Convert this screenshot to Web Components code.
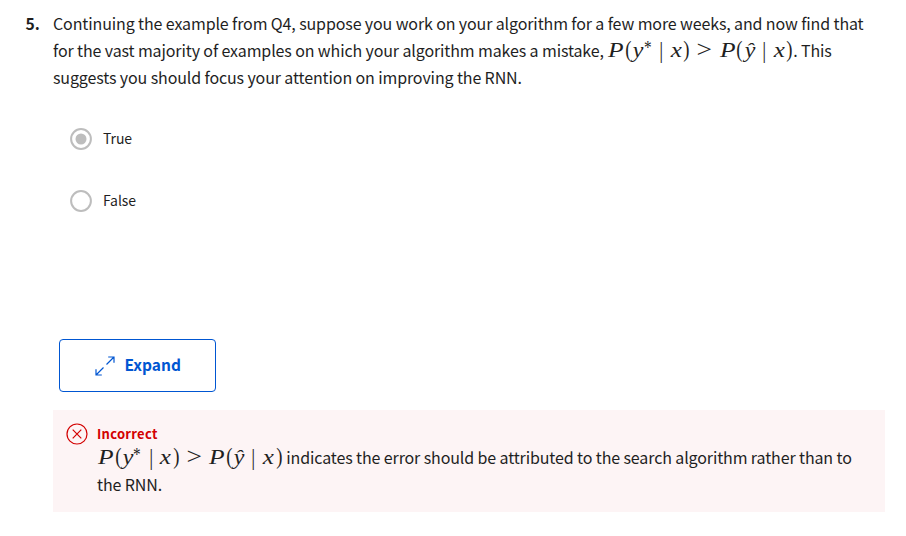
<!DOCTYPE html>
<html lang="en"><head><meta charset="utf-8"><title>Quiz question</title>
<style>
html,body{margin:0;padding:0;background:#fff}
body{color:#1f1f1f;font-family:"Noto Sans CJK SC","Noto Sans",sans-serif}
</style></head><body>
<quiz-question></quiz-question>
<script>
const define=(name,html)=>customElements.define(name,class extends HTMLElement{
 constructor(){super();this.attachShadow({mode:'open'}).innerHTML=html}});

define('text-line',`<style>:host{display:flex;align-items:baseline;height:27px;line-height:27px;white-space:nowrap;font-size:16px;letter-spacing:-.118px}</style><slot></slot>`);

define('math-formula',`<style>
:host{display:inline-flex;align-items:baseline;font:21.78px/27px "Liberation Serif",serif;height:27px;letter-spacing:0}
span{display:inline-block;white-space:pre;line-height:27px}
i{display:inline-block;transform-origin:0 70%}
.p{width:16.8px}.p i{transform:translateX(1.1px) scaleX(1.17)}
.b{width:8.3px}.b i{font-style:normal;transform:translateX(1.3px) scale(.86,1.06)}
.y{width:11.3px}.y i{transform:translateX(.8px) scale(1.1,1)}
.s{width:8.5px;font-size:18px}.s i{font-style:normal;transform:translateY(-3px) scaleX(.85)}
.v{width:17.6px;text-align:center}.v i{font-style:normal;transform-origin:50% 50%;transform:scale(.9,1.08)}
.x{width:12.2px}.x i{transform:translateX(.8px) scaleX(1.15)}
.g{width:28.4px;text-align:center}.g i{font-style:normal;transform-origin:50% 70%;transform:scale(1.26,1.08)}
</style><span class="p"><i>P</i></span><span class="b"><i>(</i></span><span class="y"><i>y</i></span><span class="s"><i>*</i></span><span class="v"><i>|</i></span><span class="x"><i>x</i></span><span class="b"><i>)</i></span><span class="g"><i>&gt;</i></span><span class="p"><i>P</i></span><span class="b"><i>(</i></span><span class="y"><i>ŷ</i></span><span class="v"><i>|</i></span><span class="x"><i>x</i></span><span class="b"><i>)</i></span>`);

define('radio-option',`<style>:host{display:flex;align-items:center;height:22px;gap:11px;font-size:14px;line-height:22px;letter-spacing:-.1px}svg{display:block}span{margin-top:-2px}:host(:not([checked])) .dot{display:none}</style>
<svg width="22" height="22"><circle cx="11" cy="11" r="9.9" fill="#fff" stroke="#bdbdbd" stroke-width="2"/><circle class="dot" cx="11" cy="11" r="5.5" fill="#bdbdbd"/></svg><span><slot></slot></span>`);

define('expand-button',`<style>:host{display:block}button{box-sizing:border-box;width:157px;height:53px;border:1px solid #0056d2;border-radius:4px;background:#fff;color:#0056d2;display:flex;align-items:center;padding:0 0 0 35px;gap:9.5px;font:bold 15.5px/24px "Noto Sans CJK SC",sans-serif}span{margin-top:-4px}</style>
<button><svg width="20" height="20" fill="none" stroke="#0056d2" stroke-width="1.2"><path d="M11.5 8.5 19 1M13.2 1H19V6.8M8.5 11.5 1 19M1 13.2V19H6.8"/></svg><span><slot></slot></span></button>`);

define('answer-feedback',`<style>:host{display:flex;box-sizing:border-box;width:832px;height:102px;background:#fdf4f5;padding:13px 0 0 13px;gap:9px}
svg{display:block;flex:none}.title{font-size:13px;line-height:22px;height:21px;font-weight:bold;color:#d30001;letter-spacing:.28px}</style>
<svg width="22" height="22" fill="none" stroke="#d30001" stroke-width="1.2"><circle cx="11" cy="11" r="10"/><path d="M6.7 6.7 15.3 15.3M15.3 6.7 6.7 15.3"/></svg>
<div><div class="title">Incorrect</div><slot></slot></div>`);

define('quiz-question',`<style>
:host{display:grid;grid-template-columns:27px 832px;padding:10px 0 0 26px;width:859px}
.num{font-size:15.7px;line-height:27px;font-weight:bold;margin-left:-.5px}
.options{display:grid;gap:40px;padding:37px 0 0 17px}
expand-button{margin:127px 0 18px 6px}
</style>
<div class="num">5.</div>
<div><text-line><span>Continuing the example from Q4, suppose you work on your algorithm for a few more weeks, and now find that</span></text-line>
<text-line><span>for the vast majority of examples on which your algorithm makes a mistake,&nbsp;</span><math-formula></math-formula><span>. This</span></text-line>
<text-line><span>suggests you should focus your attention on improving the RNN.</span></text-line>
<div class="options"><radio-option checked>True</radio-option><radio-option>False</radio-option></div>
<expand-button>Expand</expand-button>
<answer-feedback><text-line><math-formula></math-formula><span>&nbsp;indicates the error should be attributed to the search algorithm rather than to</span></text-line><text-line><span>the RNN.</span></text-line></answer-feedback></div>`);
</script></body></html>
